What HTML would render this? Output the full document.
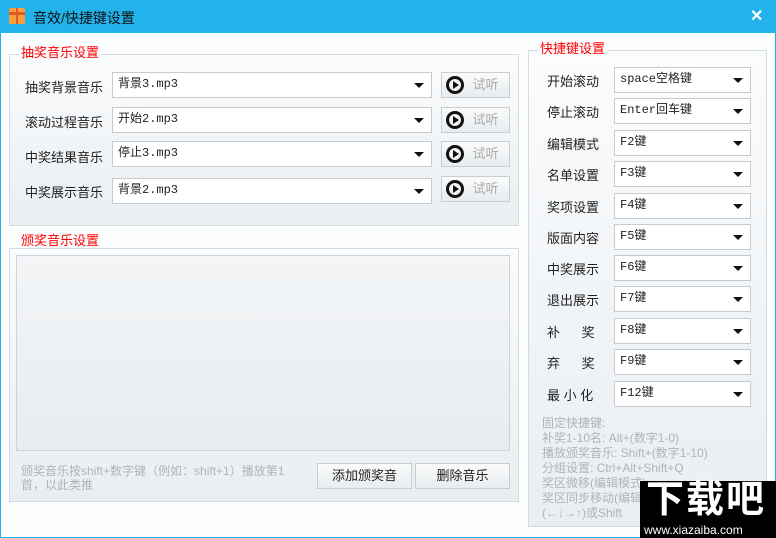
<!DOCTYPE html>
<html><head><meta charset="utf-8"><style>
*{margin:0;padding:0;box-sizing:border-box}
body{width:776px;height:538px;position:relative;overflow:hidden;background:#22b3ec;font-family:"Liberation Sans","Noto Sans CJK SC",sans-serif;font-size:13px;color:#222}
.a{position:absolute}
.body{left:1px;top:33px;width:774px;height:504px;background:#fdfefe}
.grp{position:absolute;border:1px solid #d4dadf;background:linear-gradient(#fbfcfd,#e9eef2)}
.gt{position:absolute;color:#f00;background:#fbfcfd;padding:0 2px;font-size:13px;line-height:14px}
.cb{position:absolute;height:26px;background:#fff;border:1px solid #c6cbd0;font-family:"Liberation Mono","Noto Sans CJK SC",monospace;font-size:12px;line-height:22px;padding-left:5px}
.cb:after{content:"";position:absolute;right:7px;top:10px;border-left:5px solid transparent;border-right:5px solid transparent;border-top:5px solid #111}
.lb{position:absolute;font-size:13px}
.btn{position:absolute;border:1px solid #c8cdd1;background:linear-gradient(#fafbfb,#e8ecef);text-align:center;font-size:13px;line-height:24px}
.play{position:absolute;left:4px;top:3px;width:18px;height:18px;border:3px solid #111;border-radius:50%}
.play:after{content:"";position:absolute;left:4px;top:2px;border-top:4px solid transparent;border-bottom:4px solid transparent;border-left:6px solid #111}
.hint{color:#aeb4b8;font-size:12px;line-height:14px}
</style></head><body>
<div class="a" style="left:9px;top:8px;width:16px;height:16px;background:#f5a03a;border-radius:2px"></div>
<div class="a" style="left:9px;top:12px;width:16px;height:3px;background:#e2562a"></div>
<div class="a" style="left:16px;top:8px;width:2px;height:16px;background:#e2562a"></div>
<div class="a" style="left:33px;top:8px;font-size:14px;color:#111">音效/快捷键设置</div>
<div class="a" style="left:750px;top:6px;color:#fff;font-size:16px;font-weight:bold">✕</div>
<div class="a body"></div>

<div class="grp" style="left:9px;top:54px;width:510px;height:172px"></div>
<div class="gt" style="left:19px;top:46px">抽奖音乐设置</div>
<div class="lb" style="left:25px;top:77px">抽奖背景音乐</div>
<div class="lb" style="left:25px;top:112px">滚动过程音乐</div>
<div class="lb" style="left:25px;top:147px">中奖结果音乐</div>
<div class="lb" style="left:25px;top:182px">中奖展示音乐</div>
<div class="cb" style="left:112px;top:72px;width:320px">背景3.mp3</div>
<div class="cb" style="left:112px;top:107px;width:320px">开始2.mp3</div>
<div class="cb" style="left:112px;top:141px;width:320px">停止3.mp3</div>
<div class="cb" style="left:112px;top:178px;width:320px">背景2.mp3</div>
<div class="btn" style="left:441px;top:72px;width:69px;height:26px;color:#aaa;padding-left:20px"><span class="play"></span>试听</div>
<div class="btn" style="left:441px;top:107px;width:69px;height:26px;color:#aaa;padding-left:20px"><span class="play"></span>试听</div>
<div class="btn" style="left:441px;top:141px;width:69px;height:26px;color:#aaa;padding-left:20px"><span class="play"></span>试听</div>
<div class="btn" style="left:441px;top:176px;width:69px;height:26px;color:#aaa;padding-left:20px"><span class="play"></span>试听</div>

<div class="grp" style="left:9px;top:248px;width:510px;height:254px"></div>
<div class="gt" style="left:19px;top:234px">颁奖音乐设置</div>
<div class="a" style="left:16px;top:255px;width:494px;height:196px;border:1px solid #cdd3d8;background:linear-gradient(#f3f5f7,#e8ecef)"></div>
<div class="a hint" style="left:21px;top:464px;width:276px">颁奖音乐按shift+数字键（例如：shift+1）播放第1首，以此类推</div>
<div class="btn" style="left:317px;top:463px;width:95px;height:26px">添加颁奖音</div>
<div class="btn" style="left:415px;top:463px;width:95px;height:26px">删除音乐</div>

<div class="grp" style="left:528px;top:50px;width:239px;height:477px"></div>
<div class="gt" style="left:538px;top:42px">快捷键设置</div>
<div class="lb" style="left:547px;top:71px">开始滚动</div>
<div class="lb" style="left:547px;top:102px">停止滚动</div>
<div class="lb" style="left:547px;top:134px">编辑模式</div>
<div class="lb" style="left:547px;top:165px">名单设置</div>
<div class="lb" style="left:547px;top:197px">奖项设置</div>
<div class="lb" style="left:547px;top:228px">版面内容</div>
<div class="lb" style="left:547px;top:259px">中奖展示</div>
<div class="lb" style="left:547px;top:290px">退出展示</div>
<div class="lb" style="left:547px;top:322px">补&nbsp;&nbsp;&nbsp;&nbsp;&nbsp;&nbsp;奖</div>
<div class="lb" style="left:547px;top:353px">弃&nbsp;&nbsp;&nbsp;&nbsp;&nbsp;&nbsp;奖</div>
<div class="lb" style="left:547px;top:385px">最&nbsp;小&nbsp;化</div>
<div class="cb" style="left:614px;top:67px;width:137px">space空格键</div>
<div class="cb" style="left:614px;top:98px;width:137px">Enter回车键</div>
<div class="cb" style="left:614px;top:130px;width:137px">F2键</div>
<div class="cb" style="left:614px;top:161px;width:137px">F3键</div>
<div class="cb" style="left:614px;top:193px;width:137px">F4键</div>
<div class="cb" style="left:614px;top:224px;width:137px">F5键</div>
<div class="cb" style="left:614px;top:255px;width:137px">F6键</div>
<div class="cb" style="left:614px;top:286px;width:137px">F7键</div>
<div class="cb" style="left:614px;top:318px;width:137px">F8键</div>
<div class="cb" style="left:614px;top:349px;width:137px">F9键</div>
<div class="cb" style="left:614px;top:381px;width:137px">F12键</div>
<div class="a hint" style="left:542px;top:416px;width:225px;font-size:12px;line-height:15px;white-space:nowrap;overflow:hidden">固定快捷键:<br>补奖1-10名: Alt+(数字1-0)<br>播放颁奖音乐: Shift+(数字1-10)<br>分组设置: Ctrl+Alt+Shift+Q<br>奖区微移(编辑模式): ←↓→↑<br>奖区同步移动(编辑模式):<br>(←↓→↑)或Shift</div>

<div class="a" style="left:640px;top:481px;width:136px;height:57px;background:#000"></div>
<div class="a" style="left:646px;top:478px;color:#fff;font-size:38px;font-weight:bold;line-height:44px;letter-spacing:2px">下载吧</div>
<div class="a" style="left:644px;top:523px;color:#fff;font-size:12px;line-height:14px">www.xiazaiba.com</div>
</body></html>
